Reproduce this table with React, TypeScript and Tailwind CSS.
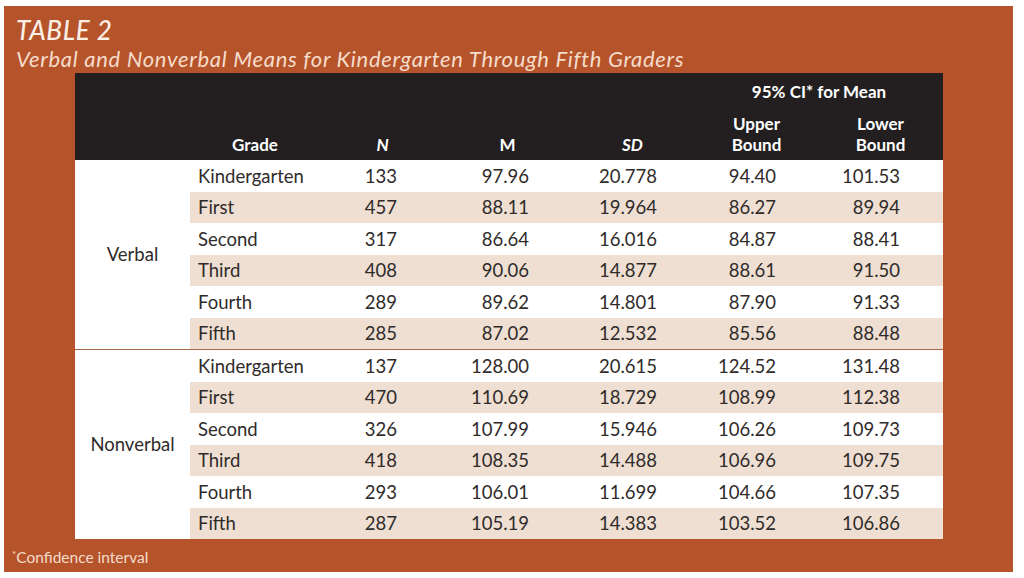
import React from "react";

type Row = { grade: string; n: string; m: string; sd: string; up: string; lo: string };

const verbal: Row[] = [
  { grade: "Kindergarten", n: "133", m: "97.96", sd: "20.778", up: "94.40", lo: "101.53" },
  { grade: "First", n: "457", m: "88.11", sd: "19.964", up: "86.27", lo: "89.94" },
  { grade: "Second", n: "317", m: "86.64", sd: "16.016", up: "84.87", lo: "88.41" },
  { grade: "Third", n: "408", m: "90.06", sd: "14.877", up: "88.61", lo: "91.50" },
  { grade: "Fourth", n: "289", m: "89.62", sd: "14.801", up: "87.90", lo: "91.33" },
  { grade: "Fifth", n: "285", m: "87.02", sd: "12.532", up: "85.56", lo: "88.48" },
];

const nonverbal: Row[] = [
  { grade: "Kindergarten", n: "137", m: "128.00", sd: "20.615", up: "124.52", lo: "131.48" },
  { grade: "First", n: "470", m: "110.69", sd: "18.729", up: "108.99", lo: "112.38" },
  { grade: "Second", n: "326", m: "107.99", sd: "15.946", up: "106.26", lo: "109.73" },
  { grade: "Third", n: "418", m: "108.35", sd: "14.488", up: "106.96", lo: "109.75" },
  { grade: "Fourth", n: "293", m: "106.01", sd: "11.699", up: "104.66", lo: "107.35" },
  { grade: "Fifth", n: "287", m: "105.19", sd: "14.383", up: "103.52", lo: "106.86" },
];

function Group({ label, rows, border }: { label: string; rows: Row[]; border?: boolean }) {
  return (
    <div className={"flex " + (border ? "border-b border-[#a86a4c]" : "")}>
      <div className="w-[115px] flex items-center justify-center text-[18.5px] text-[#2f2b2a]">{label}</div>
      <div className="flex flex-col">
        {rows.map((r, i) => (
          <div
            key={r.grade}
            className={
              "flex h-[31.5px] items-center pt-[2px] text-[18.5px] text-[#2f2b2a] " +
              (i % 2 === 1 ? "bg-[#eedfd2]" : "bg-white")
            }
          >
            <div className="w-[130px] pl-[8px]">{r.grade}</div>
            <div className="w-[125px] pr-[48px] text-right">{r.n}</div>
            <div className="w-[125px] pr-[41px] text-right">{r.m}</div>
            <div className="w-[125px] pr-[38px] text-right">{r.sd}</div>
            <div className="w-[123px] pr-[42px] text-right">{r.up}</div>
            <div className="w-[125px] pr-[43px] text-right">{r.lo}</div>
          </div>
        ))}
      </div>
    </div>
  );
}

export default function App() {
  return (
    <div
      className="w-[1024px] h-[578px] bg-white pt-[6px] pl-[4px]"
      style={{ fontFamily: "Lato, 'Open Sans', sans-serif" }}
    >
      <div className="w-[1009px] h-[566px] bg-[#b5532a] flex flex-col">
        <div className="pl-[12px] pt-[8px]">
          <div className="text-[26px] leading-[32px] italic font-medium text-[#fbeee4] tracking-[0.6px]">TABLE 2</div>
          <div className="text-[22px] leading-[26px] italic text-[#f6dccb] tracking-[0.7px]">
            Verbal and Nonverbal Means for Kindergarten Through Fifth Graders
          </div>
        </div>
        <div className="ml-[71px] mt-[1px] w-[868px] bg-white">
          <div className="h-[87px] bg-[#231f20] text-white font-bold text-[17px] flex flex-col">
            <div className="flex h-[38px] items-center">
              <div className="ml-[620px] w-[248px] text-center">95% CI* for Mean</div>
            </div>
            <div className="flex flex-1 items-end pb-[5px] leading-[21px]">
              <div className="w-[115px]" />
              <div className="w-[130px] text-center">Grade</div>
              <div className="w-[125px] text-center italic">N</div>
              <div className="w-[125px] text-center">M</div>
              <div className="w-[125px] text-center italic">SD</div>
              <div className="w-[123px] text-center">
                Upper
                <br />
                Bound
              </div>
              <div className="w-[125px] text-center">
                Lower
                <br />
                Bound
              </div>
            </div>
          </div>
          <Group label="Verbal" rows={verbal} border />
          <Group label="Nonverbal" rows={nonverbal} />
        </div>
        <div className="pl-[8px] mt-[7px] text-[15.5px] text-[#f6dccb]">
          <sup className="text-[10px]">*</sup>Confidence interval
        </div>
      </div>
    </div>
  );
}
